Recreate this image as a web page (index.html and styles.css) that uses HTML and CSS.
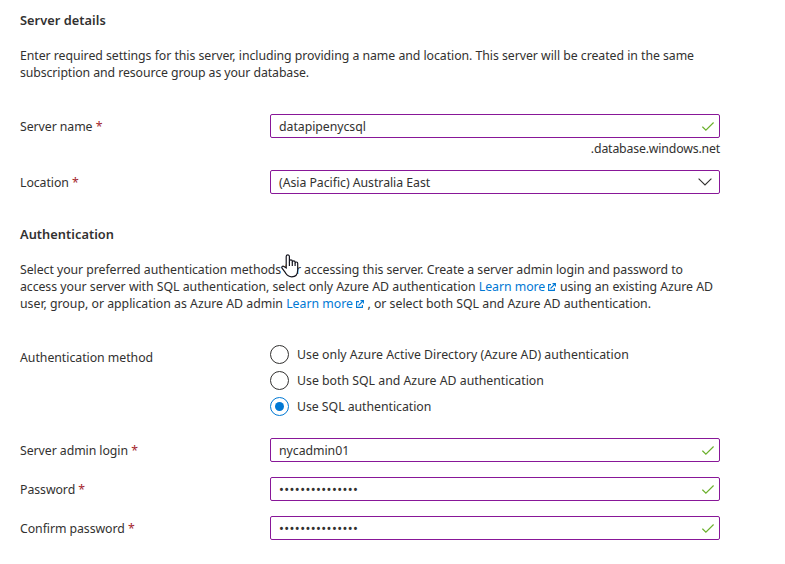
FILE: index.html
```html
<!DOCTYPE html>
<html lang="en">
<head>
<meta charset="utf-8">
<title>Create SQL Database Server</title>
<link rel="stylesheet" href="styles.css">
</head>
<body>
<svg class="defs" aria-hidden="true">
  <symbol id="check" viewBox="0 0 12 9"><path d="M.4 4.7 3.9 8.1 11.6.5"/></symbol>
  <symbol id="external" viewBox="0 0 8 8"><path d="M3 1.6H.6v5.8h5.8V5M2.5 5.5 7.3.7M4.5.6h2.9v2.9"/></symbol>
</svg>
<main class="form">
  <section class="details">
    <h2>Server details</h2>
    <p class="copy">
      <span class="line l1">Enter required settings for this server, including providing a name and location. This server will be created in the same</span>
      <span class="line l2">subscription and resource group as your database.</span>
    </p>
    <div class="row name-row">
      <label>Server name <b>*</b></label>
      <div class="control">
        <div class="box"><span class="tight">datapipenycsql</span><svg class="check"><use href="#check"/></svg></div>
        <div class="suffix">.database.windows.net</div>
      </div>
    </div>
    <div class="row">
      <label>Location <b>*</b></label>
      <div class="control box"><span class="tight">(Asia Pacific) Australia East</span><svg class="chevron" viewBox="0 0 14 8"><path d="M.6.6 7 7 13.4.6"/></svg></div>
    </div>
  </section>
  <section class="auth">
    <h2>Authentication</h2>
    <p class="copy">
      <span class="line l3">Select your preferred authentication methods for accessing this server. Create a server admin login and password to
        <svg class="pointer" viewBox="0 0 18 24"><path d="M5.2 14V2.5a1.6 1.6 0 0 1 3.2 0v5.8-1a1.45 1.45 0 0 1 2.9 0v1a1.4 1.4 0 0 1 2.8 0v1a1.3 1.3 0 0 1 2.6 0V16c0 4.2-2.2 6.8-6 6.8-3.2 0-4.7-1.5-6.3-4.1L1 14.2c-.9-1.5.8-2.7 2-1.6z"/><path d="M8.4 8v4M11.3 8v4M14.1 9v3"/></svg>
      </span>
      <span class="line l4">access your server with SQL authentication, select only Azure AD authentication <a>Learn more <svg class="external"><use href="#external"/></svg></a> using an existing Azure AD</span>
      <span class="line l5">user, group, or application as Azure AD admin <a>Learn more <svg class="external"><use href="#external"/></svg></a> , or select both SQL and Azure AD authentication.</span>
    </p>
    <div class="row method-row">
      <label>Authentication method</label>
      <div class="control radios">
        <div class="radio"><i></i><span class="wide">Use only Azure Active Directory (Azure AD) authentication</span></div>
        <div class="radio"><i></i><span>Use both SQL and Azure AD authentication</span></div>
        <div class="radio selected"><i></i><span class="tight">Use SQL authentication</span></div>
      </div>
    </div>
    <div class="row cred">
      <label>Server admin login <b>*</b></label>
      <div class="control box"><span class="tight">nycadmin01</span><svg class="check"><use href="#check"/></svg></div>
    </div>
    <div class="row cred">
      <label>Password <b>*</b></label>
      <div class="control box"><span class="dots">•••••••••••••••</span><svg class="check"><use href="#check"/></svg></div>
    </div>
    <div class="row cred">
      <label>Confirm password <b>*</b></label>
      <div class="control box"><span class="dots">•••••••••••••••</span><svg class="check"><use href="#check"/></svg></div>
    </div>
  </section>
</main>
</body>
</html>
```
FILE: styles.css
```css
* { box-sizing: border-box; }
body {
  margin: 0;
  background: #fff;
  color: #323130;
  font: 12.3px/17px "Noto Sans", "Open Sans", sans-serif;
  overflow: hidden;
}
.defs { position: absolute; width: 0; height: 0; }
.form { padding: 11px 0 0 20px; }
h2 { margin: 0; font-size: 12.8px; line-height: 18px; font-weight: 600; letter-spacing: .04px; }
.copy { margin: 18px 0 0; }
.line {
  position: relative;
  display: block;
  white-space: nowrap;
  text-align-last: justify;
}
.l1 { width: 674px; letter-spacing: -.06px; }
.l2 { width: 289px; letter-spacing: -.1px; }
.l3 { width: 663px; letter-spacing: -.06px; }
.l4 { width: 693px; letter-spacing: -.07px; }
.l5 { width: 631px; letter-spacing: -.01px; }
.tight { letter-spacing: -.04px; }
.wide { letter-spacing: .02px; }
a { color: #0078d4; }
svg { fill: none; overflow: visible; }
.external { width: 8px; height: 8px; margin: 0 .5px 0 -.5px; stroke: #0078d4; stroke-width: 1.1; }
.pointer {
  position: absolute;
  left: 261px;
  top: -7px;
  width: 18px;
  height: 24px;
  fill: #fff;
  stroke: #15151f;
  stroke-width: 1.2;
}
.row { display: flex; align-items: flex-start; }
label { width: 250px; padding-top: 1px; line-height: 24px; white-space: pre; letter-spacing: -.06px; }
label b { color: #a4262c; font-weight: 400; }
.control { width: 450px; }
.name-row { margin-top: 33px; height: 56px; }
.box {
  display: flex;
  align-items: center;
  justify-content: space-between;
  height: 24px;
  padding: 0 5px 0 8px;
  border: 1px solid #881798;
  border-radius: 2px;
}
.check { width: 12px; height: 9px; stroke: #6bb02c; stroke-width: 1.2; }
.chevron { width: 14px; height: 8px; margin-right: 2px; stroke: #323130; stroke-width: 1.1; }
.suffix { margin-top: 2px; text-align: right; letter-spacing: -.17px; }
.auth { margin-top: 30px; }
.method-row { margin-top: 33px; height: 93px; }
.method-row label { line-height: 23px; letter-spacing: -.03px; }
.radio { display: flex; align-items: center; height: 26px; gap: 8px; }
.radios { margin-top: -4px; }
.radio i {
  display: grid;
  place-items: center;
  width: 19px;
  height: 19px;
  border: 1px solid #323130;
  border-radius: 50%;
}
.selected i { border-color: #0078d4; }
.selected i::after { content: ""; width: 9px; height: 9px; border-radius: 50%; background: #0078d4; }
.cred { height: 39px; }
.dots { font-size: 13px; letter-spacing: .4px; }
```
